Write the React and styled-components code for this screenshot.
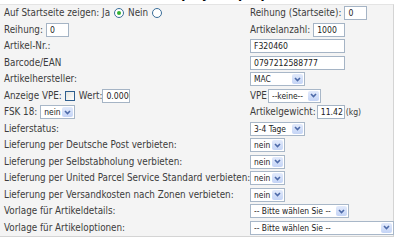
import React from "react";
import styled, { createGlobalStyle } from "styled-components";

const Global = createGlobalStyle`
  html, body { margin: 0; padding: 0; background: #ffffff; }
  body {
    font-family: "DejaVu Sans Condensed", "DejaVu Sans", sans-serif;
    font-stretch: condensed;
    font-size: 9.8px;
    color: #3c3c3c;
  }
`;

const Page = styled.div`
  width: 400px;
  height: 239px;
  overflow: hidden;
`;

const Title = styled.div`
  height: 4px;
  overflow: hidden;
  font-family: "DejaVu Sans", sans-serif;
  font-stretch: normal;
  font-weight: bold;
  font-size: 12px;
  color: #000;
  line-height: 12px;
  padding-left: 160px;
`;

const TitleText = styled.div`
  margin-top: -12px;
`;

const Panel = styled.div`
  width: 393px;
  background: #f4f4f4;
  border-top: 1px solid #e4e4e4;
  border-right: 1px solid #d4d4d4;
  border-bottom: 1px solid #d4d4d4;
  display: grid;
  grid-template-columns: 245px 1fr;
  grid-auto-rows: 16.5px;
`;

const Cell = styled.div`
  display: flex;
  align-items: center;
  gap: ${(p) => p.$gap ?? 3}px;
  padding-left: ${(p) => (p.$right ? 5 : 4)}px;
  white-space: nowrap;
`;

const Label = styled.span`
  line-height: 1;
`;

const Input = styled.div`
  box-sizing: border-box;
  width: ${(p) => p.$w}px;
  height: 14px;
  background: #fff;
  border: 1px solid #a5b4c5;
  font-size: 8.6px;
  padding-left: 3px;
  display: flex;
  align-items: center;
  color: #222;
  overflow: hidden;
  white-space: nowrap;
`;

const SelectBox = styled.div`
  box-sizing: border-box;
  width: ${(p) => p.$w}px;
  height: 14px;
  background: #fff;
  border: 1px solid #a8b7c8;
  display: flex;
  align-items: center;
  font-size: 8.4px;
  color: #222;
  padding-left: 3px;
`;

const SelText = styled.span`
  flex: 1;
  overflow: hidden;
  white-space: nowrap;
`;

const Arrow = styled.span`
  width: 11px;
  align-self: stretch;
  margin: 1px;
  background: linear-gradient(#e2eafb, #c4d4f6);
  border-radius: 2px;
  display: flex;
  align-items: center;
  justify-content: center;
`;

const Radio = styled.span`
  box-sizing: border-box;
  width: 10px;
  height: 10px;
  border-radius: 50%;
  border: 1px solid #3a6d98;
  background: #fff;
  display: inline-flex;
  align-items: center;
  justify-content: center;
  margin: 0 4px;
  &::after {
    content: "";
    display: ${(p) => (p.$on ? "block" : "none")};
    width: 4px;
    height: 4px;
    border-radius: 50%;
    background: #33b233;
  }
`;

const Check = styled.span`
  box-sizing: border-box;
  width: 10px;
  height: 10px;
  border: 1px solid #2f5f8f;
  background: linear-gradient(135deg, #e4e4de, #ffffff);
  margin: 0 4px 0 3px;
`;

const Unit = styled.span`
  font-size: 8.6px;
`;

const Chevron = () => (
  <svg width="7" height="5" viewBox="0 0 7 5">
    <path d="M1 1 L3.5 3.5 L6 1" fill="none" stroke="#4d6aa8" strokeWidth="1.6" />
  </svg>
);

const Select = ({ w, text }) => (
  <SelectBox $w={w}>
    <SelText>{text}</SelText>
    <Arrow>
      <Chevron />
    </Arrow>
  </SelectBox>
);

const LabelRow = ({ label, children }) => (
  <>
    <Cell>
      <Label>{label}</Label>
    </Cell>
    <Cell $right>{children}</Cell>
  </>
);

export default function App() {
  return (
    <Page>
      <Global />
      <Title>
        <TitleText>Display / Laptop</TitleText>
      </Title>
      <Panel>
        <Cell $gap={0}>
          <Label>Auf Startseite zeigen: Ja</Label>
          <Radio $on />
          <Label>Nein</Label>
          <Radio />
        </Cell>
        <Cell $right>
          <Label>Reihung (Startseite):</Label>
          <Input $w={23}>0</Input>
        </Cell>

        <Cell>
          <Label>Reihung:</Label>
          <Input $w={23}>0</Input>
        </Cell>
        <Cell $right>
          <Label>Artikelanzahl:</Label>
          <Input $w={32}>1000</Input>
        </Cell>

        <LabelRow label="Artikel-Nr.:">
          <Input $w={95}>F320460</Input>
        </LabelRow>

        <LabelRow label="Barcode/EAN">
          <Input $w={95}>0797212588777</Input>
        </LabelRow>

        <LabelRow label="Artikelhersteller:">
          <Select w={55} text="MAC" />
        </LabelRow>

        <Cell $gap={0}>
          <Label>Anzeige VPE:</Label>
          <Check />
          <Label>Wert:</Label>
          <Input $w={28}>0.0000</Input>
        </Cell>
        <Cell $right $gap={1}>
          <Label>VPE</Label>
          <Select w={53} text="--keine--" />
        </Cell>

        <Cell>
          <Label>FSK 18:</Label>
          <Select w={35} text="nein" />
        </Cell>
        <Cell $right $gap={1}>
          <Label>Artikelgewicht:</Label>
          <Input $w={28}>11.42</Input>
          <Unit>(kg)</Unit>
        </Cell>

        <LabelRow label="Lieferstatus:">
          <Select w={55} text="3-4 Tage" />
        </LabelRow>

        <LabelRow label="Lieferung per Deutsche Post verbieten:">
          <Select w={35} text="nein" />
        </LabelRow>

        <LabelRow label="Lieferung per Selbstabholung verbieten:">
          <Select w={35} text="nein" />
        </LabelRow>

        <LabelRow label="Lieferung per United Parcel Service Standard verbieten:">
          <Select w={35} text="nein" />
        </LabelRow>

        <LabelRow label="Lieferung per Versandkosten nach Zonen verbieten:">
          <Select w={35} text="nein" />
        </LabelRow>

        <LabelRow label="Vorlage für Artikeldetails:">
          <Select w={99} text="-- Bitte wählen Sie --" />
        </LabelRow>

        <LabelRow label="Vorlage für Artikeloptionen:">
          <Select w={144} text="-- Bitte wählen Sie --" />
        </LabelRow>
      </Panel>
    </Page>
  );
}
